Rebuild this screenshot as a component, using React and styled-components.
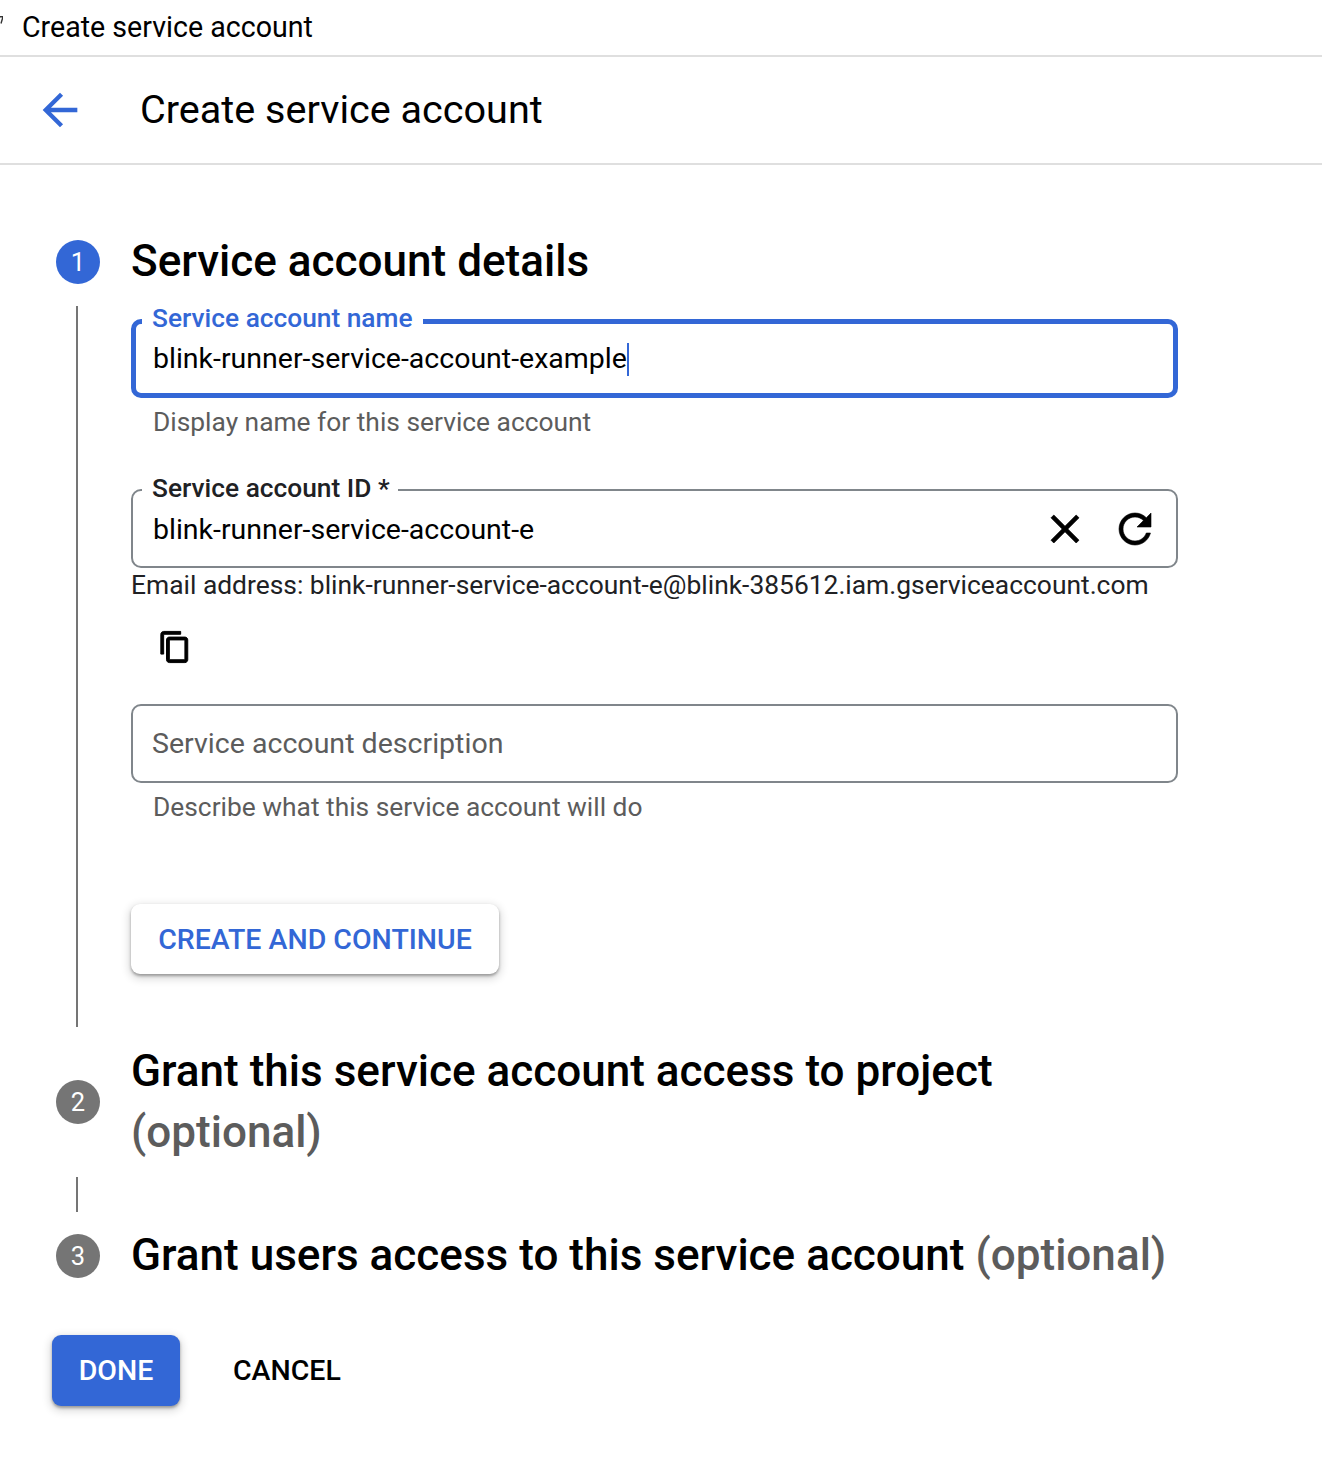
import React from "react";
import styled, { createGlobalStyle } from "styled-components";

const BLUE = "#3367d6";
const GREY = "#80868b";
const MUTED = "#5c5c5c";

const Global = createGlobalStyle`
  html, body { margin: 0; padding: 0; background: #fff; }
  body { font-family: Roboto, "Liberation Sans", sans-serif; color: #000; -webkit-font-smoothing: antialiased; }
  * { box-sizing: border-box; }
`;

const Page = styled.div`
  width: 1322px;
  height: 1480px;
  overflow: hidden;
`;

const TopBar = styled.div`
  height: 57px;
  border-bottom: 2px solid #dfdfdf;
  display: flex;
  align-items: center;
  padding: 0 0 2px 22px;
  font-size: 28.6px;
  position: relative;
`;

const Clipped = styled.svg`
  position: absolute;
  left: 0;
  top: 16px;
  width: 3px;
  height: 8px;
`;

const Header = styled.header`
  height: 108px;
  border-bottom: 2px solid #dfdfdf;
  display: flex;
  align-items: center;
  padding-left: 34px;
  gap: 54px;
`;

const Title = styled.h1`
  margin: 0;
  padding-bottom: 2px;
  font-size: 39.6px;
  font-weight: 400;
`;

const Icon = styled.svg`
  width: ${(p) => p.$size}px;
  height: ${(p) => p.$size}px;
  fill: ${(p) => p.$color || "#000"};
  stroke: ${(p) => (p.$bold ? p.$color || "#000" : "none")};
  stroke-width: ${(p) => p.$bold || 0};
  flex: none;
  display: block;
`;

const Main = styled.main`
  padding: 66px 0 0 56px;
  width: 1178px;
`;

const StepHead = styled.div`
  display: grid;
  grid-template-columns: 44px 1fr;
  column-gap: 31px;
  align-items: center;
`;

const Badge = styled.div`
  width: 44px;
  height: 44px;
  margin-bottom: 2px;
  border-radius: 50%;
  background: ${(p) => (p.$active ? BLUE : "#757575")};
  color: #fff;
  font-size: 25.5px;
  display: flex;
  align-items: center;
  justify-content: center;
`;

const StepTitle = styled.h2`
  margin: 0;
  padding-bottom: 2px;
  font-size: 44.06px;
  font-weight: 500;
  line-height: 61px;
`;

const Optional = styled.span`
  color: ${MUTED};
`;

const StepBody = styled.div`
  display: grid;
  grid-template-columns: 2px 1fr;
  column-gap: 53px;
  margin-left: 20px;
  min-height: ${(p) => p.$h}px;
  margin-top: ${(p) => p.$top}px;
  margin-bottom: ${(p) => p.$bottom}px;
`;

const Rail = styled.div`
  background: #757575;
`;

const Form = styled.div`
  display: flex;
  flex-direction: column;
  margin-top: -1px;
`;

const Field = styled.fieldset`
  margin: ${(p) => p.$top || 0}px 0 0;
  min-width: 0;
  height: ${(p) => p.$h}px;
  padding: 0 ${(p) => (p.$focused ? 6 : 9)}px;
  border: ${(p) => (p.$focused ? `5px solid ${BLUE}` : `2px solid ${GREY}`)};
  border-radius: 10px;
  display: flex;
  align-items: flex-start;
`;

/* $lift raises the label above the notch line while the notch itself stays centred on the 32px box */
const Legend = styled.legend`
  padding: 0 ${(p) => (p.$focused ? 10 : 8)}px ${(p) => p.$lift * 2}px 10px;
  font-size: 26.3px;
  font-weight: 500;
  line-height: ${(p) => 32 - p.$lift * 2}px;
  color: ${(p) => (p.$focused ? BLUE : "#202124")};
`;

const Value = styled.div`
  flex: 1;
  padding-left: 11px;
  font-size: 28.5px;
  line-height: 36px;
  display: flex;
  align-items: center;
  margin-top: ${(p) => p.$shift || 0}px;
`;

const Caret = styled.span`
  width: 2px;
  height: 33px;
  background: ${BLUE};
`;

const Actions = styled.div`
  display: flex;
  gap: 22px;
  margin-top: -1px;
  padding-right: 8px;
`;

const Hint = styled.div`
  margin: ${(p) => p.$top}px 0 0 22px;
  font-size: 26.35px;
  line-height: 30px;
  color: ${MUTED};
`;

const Email = styled.div`
  margin-top: 1px;
  font-size: 26.4px;
  line-height: 32px;
  color: #202124;
  white-space: nowrap;
`;

const CopyButton = styled.div`
  margin: 29px 0 0 27px;
`;

const Description = styled.div`
  margin-top: 40px;
  height: 79px;
  border: 2px solid ${GREY};
  border-radius: 10px;
  padding: 0 0 1px 19px;
  display: flex;
  align-items: center;
  font-size: 28.55px;
  color: ${MUTED};
`;

const RaisedButton = styled.button`
  margin-top: ${(p) => p.$top || 0}px;
  height: ${(p) => p.$h}px;
  width: ${(p) => p.$w}px;
  border: 0;
  border-radius: 9px;
  font: 500 28.5px Roboto, sans-serif;
  background: ${(p) => (p.$primary ? BLUE : "#fff")};
  color: ${(p) => (p.$primary ? "#fff" : BLUE)};
  box-shadow: 0 2px 3px rgba(0, 0, 0, 0.32), 0 3px 8px 2px rgba(0, 0, 0, 0.14);
  padding: 0;
`;

const Footer = styled.div`
  margin: 47px 0 0 -4px;
  display: flex;
  align-items: center;
`;

const TextButton = styled.button`
  margin-left: 53px;
  border: 0;
  background: none;
  padding: 0;
  font: 500 28.5px Roboto, sans-serif;
  color: #000;
`;

const ArrowBack = () => (
  <Icon $size={52} $color={BLUE} viewBox="0 0 24 24">
    <path d="M20 11H7.83l5.59-5.59L12 4l-8 8 8 8 1.41-1.41L7.83 13H20v-2z" />
  </Icon>
);

export default function App() {
  return (
    <Page>
      <Global />
      <TopBar>
        <Clipped viewBox="0 0 3 8">
          <path d="M0 .7h3L1 7.5" fill="none" stroke="#333" strokeWidth="1.4" />
        </Clipped>
        Create service account
      </TopBar>
      <Header>
        <ArrowBack />
        <Title>Create service account</Title>
      </Header>
      <Main>
        <StepHead>
          <Badge $active>1</Badge>
          <StepTitle>Service account details</StepTitle>
        </StepHead>
        <StepBody $h={721} $top={12} $bottom={14}>
          <Rail />
          <Form>
            <Field $focused $h={93}>
              <Legend $focused $lift={3}>Service account name</Legend>
              <Value $shift={4}>
                blink-runner-service-account-example
                <Caret />
              </Value>
            </Field>
            <Hint $top={9}>Display name for this service account</Hint>
            <Field $top={37} $h={94}>
              <Legend $lift={2}>Service account ID *</Legend>
              <Value $shift={6}>blink-runner-service-account-e</Value>
              <Actions>
                <Icon $size={48} $bold={0.35} viewBox="0 0 24 24">
                  <path d="M19 6.41L17.59 5 12 10.59 6.41 5 5 6.41 10.59 12 5 17.59 6.41 19 12 13.41 17.59 19 19 17.59 13.41 12z" />
                </Icon>
                <Icon $size={48} $bold={0.3} viewBox="0 0 24 24">
                  <path d="M17.65 6.35C16.2 4.9 14.21 4 12 4c-4.42 0-7.99 3.58-7.99 8s3.57 8 7.99 8c3.73 0 6.84-2.55 7.73-6h-2.08c-.82 2.33-3.04 4-5.65 4-3.31 0-6-2.69-6-6s2.69-6 6-6c1.66 0 3.14.69 4.22 1.78L13 11h7V4l-2.35 2.35z" />
                </Icon>
              </Actions>
            </Field>
            <Email>Email address: blink-runner-service-account-e@blink-385612.iam.gserviceaccount.com</Email>
            <CopyButton>
              <Icon $size={34} $bold={0.7} viewBox="0 0 24 24">
                <path d="M16 1H4c-1.1 0-2 .9-2 2v14h2V3h12V1zm3 4H8c-1.1 0-2 .9-2 2v14c0 1.1.9 2 2 2h11c1.1 0 2-.9 2-2V7c0-1.1-.9-2-2-2zm0 16H8V7h11v14z" />
              </Icon>
            </CopyButton>
            <Description>Service account description</Description>
            <Hint $top={9}>Describe what this service account will do</Hint>
            <RaisedButton $top={82} $w={368} $h={70}>CREATE AND CONTINUE</RaisedButton>
          </Form>
        </StepBody>
        <StepHead>
          <Badge>2</Badge>
          <StepTitle>
            Grant this service account access to project <Optional>(optional)</Optional>
          </StepTitle>
        </StepHead>
        <StepBody $h={35} $top={12} $bottom={13}>
          <Rail />
          <div />
        </StepBody>
        <StepHead>
          <Badge>3</Badge>
          <StepTitle>
            Grant users access to this service account <Optional>(optional)</Optional>
          </StepTitle>
        </StepHead>
        <Footer>
          <RaisedButton $primary $w={128} $h={71}>DONE</RaisedButton>
          <TextButton>CANCEL</TextButton>
        </Footer>
      </Main>
    </Page>
  );
}
